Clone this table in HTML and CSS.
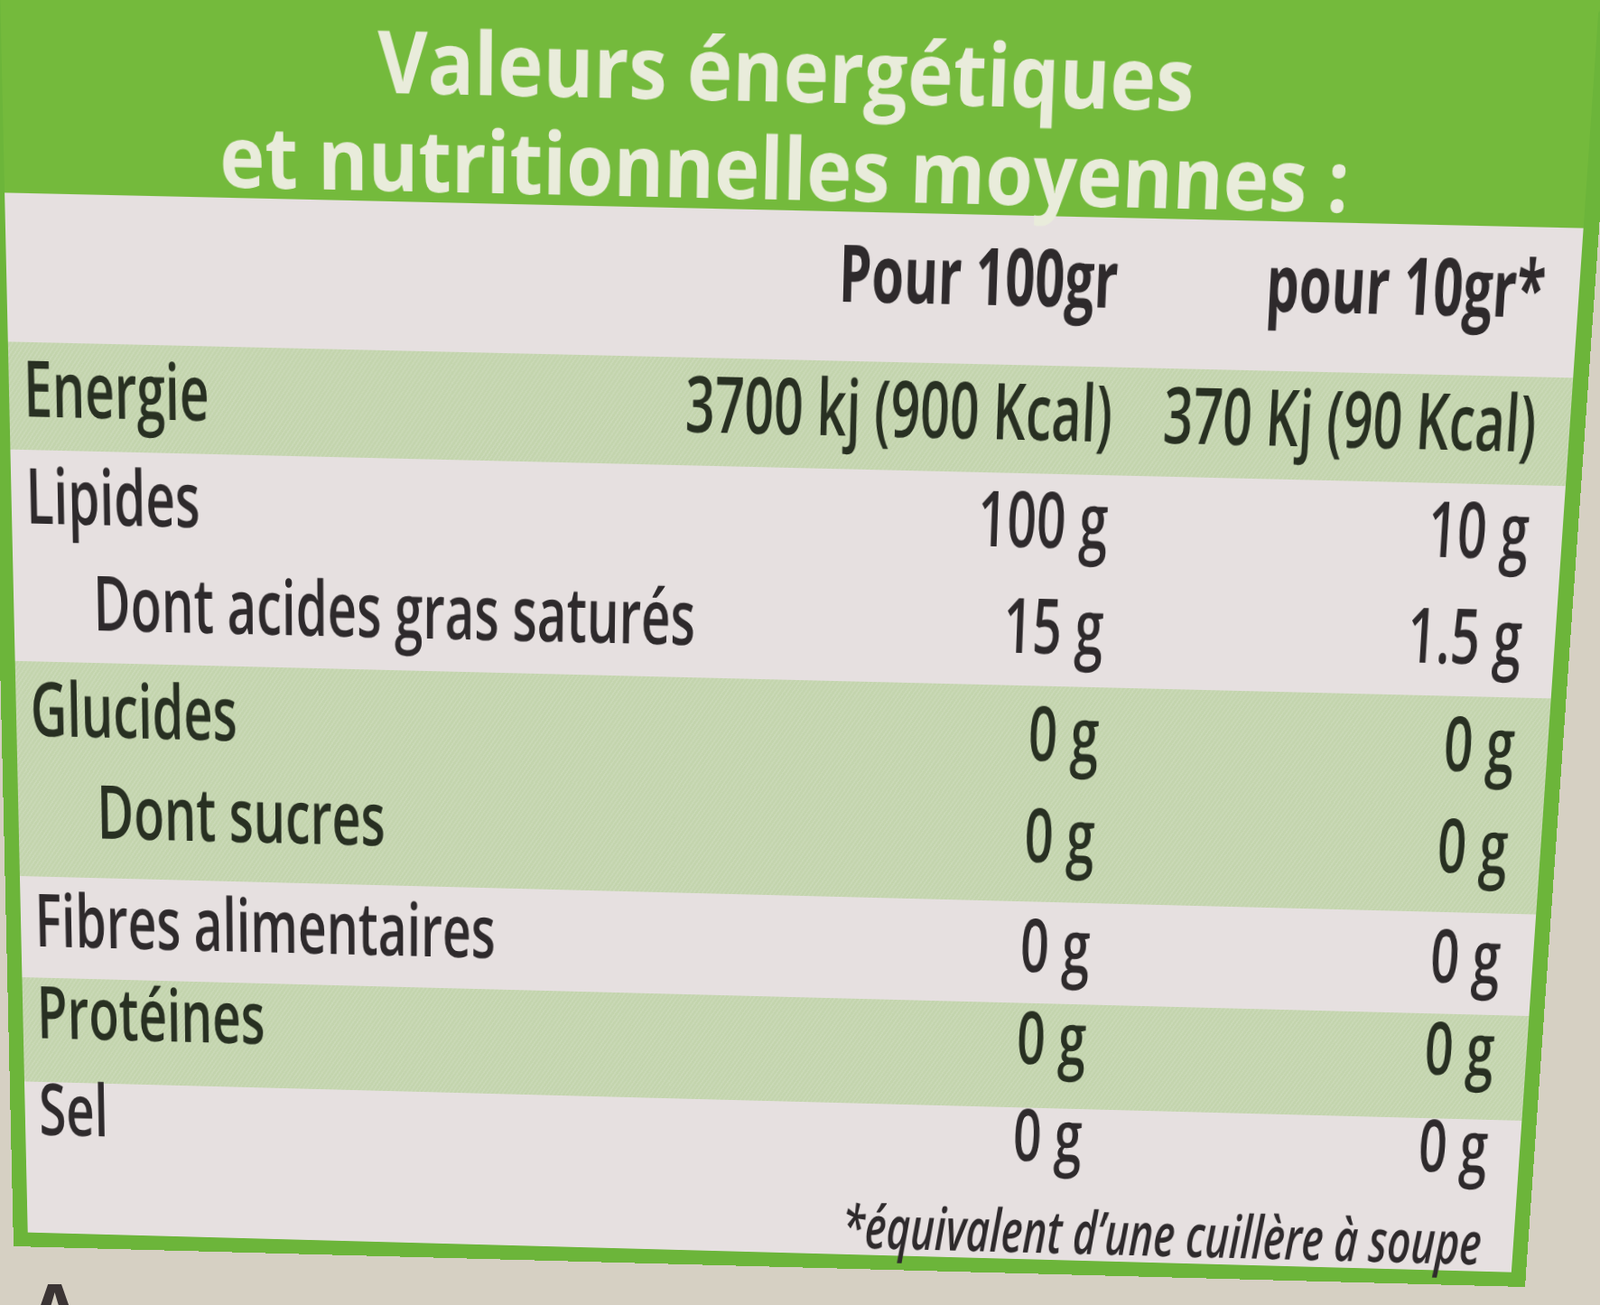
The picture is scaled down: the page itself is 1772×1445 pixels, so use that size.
FILE: index.html
```html
<!DOCTYPE html>
<html lang="fr">
<head>
<meta charset="utf-8">
<title>Valeurs énergétiques et nutritionnelles moyennes</title>
<link rel="stylesheet" href="styles.css">
</head>
<body>
<div class="label">
  <header class="label__head">
    <h1 class="label__title">
      <span class="label__line">Valeurs énergétiques</span>
      <span class="label__line">et nutritionnelles moyennes :</span>
    </h1>
  </header>
  <div class="label__body">
    <div class="table">
      <div class="row row--cols"><span class="name"></span><span class="val">Pour 100gr</span><span class="val">pour 10gr*</span></div>
      <div class="row row--band"><span class="name">Energie</span><span class="val">3700 kj (900 Kcal)</span><span class="val">370 Kj (90 Kcal)</span></div>
      <div class="row"><span class="name">Lipides</span><span class="val">100 g</span><span class="val">10 g</span></div>
      <div class="row row--sub"><span class="name">Dont acides gras saturés</span><span class="val">15 g</span><span class="val">1.5 g</span></div>
      <div class="row row--band row--tall"><span class="name">Glucides</span><span class="val">0 g</span><span class="val">0 g</span></div>
      <div class="row row--band row--tall row--sub row--up"><span class="name">Dont sucres</span><span class="val">0 g</span><span class="val">0 g</span></div>
      <div class="row"><span class="name">Fibres alimentaires</span><span class="val">0 g</span><span class="val">0 g</span></div>
      <div class="row row--band row--tall row--raise"><span class="name">Protéines</span><span class="val">0 g</span><span class="val">0 g</span></div>
      <div class="row row--last"><span class="name">Sel</span><span class="val">0 g</span><span class="val">0 g</span></div>
      <div class="row row--foot"><span class="foot">*équivalent d’une cuillère à soupe</span></div>
    </div>
  </div>
</div>
<p class="next">A</p>
</body>
</html>
```

FILE: styles.css
```css
html, body {
  margin: 0;
  padding: 0;
  overflow: hidden;
  background: #d6d0c3;
}

body {
  width: 1772px;
  height: 1445px;
  font-family: "Open Sans", "DejaVu Sans", sans-serif;
}

/* the printed label, photographed in slight perspective */
.label {
  box-sizing: border-box;
  width: 1760px;
  height: 1420px;
  border: 17px solid #6cb53a;
  border-top-color: #74ba3c;
  background: #e6e0e0;
  display: flex;
  flex-direction: column;
  transform-origin: 0 0;
  transform: matrix3d(1.0062727, 0.0217563, 0, -0.0000038373,
                      0.0237051, 1.0647458, 0, 0.0000549,
                      0, 0, 1, 0,
                      -17.6892, -42.539, 0, 0.986824);
}

.label__head {
  height: 223px;
  flex: none;
  box-sizing: border-box;
  padding: 24px 20px 0 0;
  background: #74ba3c;
}

.label__title {
  margin: 0;
  font-family: "Open Sans", sans-serif;
  font-weight: 700;
  font-size: 90px;
  line-height: 102px;
  color: #e9ecdb;
  text-align: center;
  white-space: nowrap;
}

.label__line {
  display: block;
  transform: scaleX(0.93);
  transform-origin: 50% 50%;
}

.label__body {
  flex: 1;
  min-height: 0;
}

/* condensed type: the table is set wide and squeezed horizontally */
.table {
  width: 2538px;
  transform: scaleX(0.68);
  transform-origin: 0 0;
  font-family: "Open Sans", sans-serif;
  font-weight: 600;
  font-size: 84px;
  line-height: 84px;
  color: #2e2a2c;
}

.row {
  box-sizing: border-box;
  height: 116px;
  padding: 6px 54px 0 24px;
  display: grid;
  grid-template-columns: minmax(0, 1fr) 800px 686px;
  white-space: nowrap;
}

.name {
  min-width: 0;
}

.val {
  text-align: right;
}

.row--sub .name {
  padding-left: 108px;
}

.row--band {
  color: #283022;
  background-color: #c3d4ad;
  background-image: repeating-linear-gradient(135deg, rgba(255, 255, 255, 0.12) 0 2px, rgba(255, 255, 255, 0) 2px 5px);
}

.row--cols {
  height: 158px;
  padding-top: 21px;
  font-weight: 700;
}

.row--tall {
  height: 121px;
  padding-top: 9px;
}

.row--up {
  padding-top: 2px;
}

.row--raise {
  padding-top: 0;
  line-height: 76px;
}

.row--last {
  height: 106px;
  padding-top: 0;
  line-height: 60px;
}

.row--foot {
  height: 72px;
  padding-top: 2px;
  display: flex;
  justify-content: flex-end;
}

.foot {
  font-style: italic;
  font-weight: 600;
  font-size: 70px;
  line-height: 70px;
}

.next {
  margin: -11px 0 0 33px;
  font-family: "Open Sans", sans-serif;
  font-weight: 700;
  font-size: 80px;
  line-height: 80px;
  color: #3b3434;
}
```
